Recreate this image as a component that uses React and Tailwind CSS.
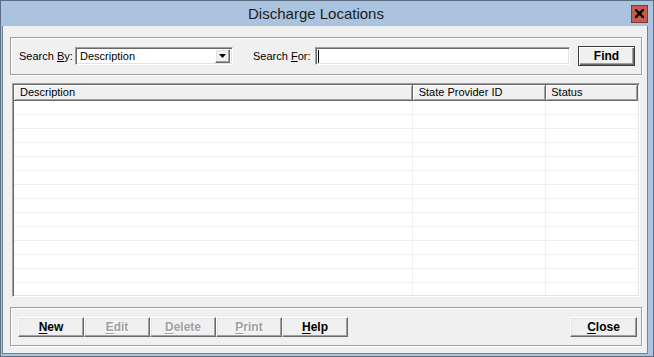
import React from 'react';

const raised = "bg-[#f0f0f0] border border-t-white border-l-white border-r-[#696969] border-b-[#696969] shadow-[inset_-1px_-1px_0_#a0a0a0,inset_1px_1px_0_#e3e3e3]";
const sunken = "bg-white border border-t-[#a0a0a0] border-l-[#a0a0a0] border-r-white border-b-white shadow-[inset_1px_1px_0_#696969,inset_-1px_-1px_0_#e3e3e3]";
const etched = "border border-[#a0a0a0] shadow-[inset_1px_1px_0_#fff,1px_1px_0_#fff]";
const headCell = "h-full bg-[#f0f0f0] border-r border-b border-[#696969] shadow-[inset_1px_1px_0_#fff,inset_-1px_-1px_0_#a0a0a0] flex items-center";

function Btn({ label, hot, disabled, width = "w-[66px]", isDefault }) {
    const rest = label.slice(1);
    return (
        <button
            className={`${width} h-[20px] flex items-center justify-center text-[12px] font-bold ${isDefault ? "bg-[#f0f0f0] border border-[#3c3c3c] shadow-[inset_1px_1px_0_#fff,inset_-1px_-1px_0_#696969,inset_-2px_-2px_0_#a0a0a0]" : raised} ${disabled ? "text-[#a0a0a0] [text-shadow:1px_1px_0_#fff]" : "text-black"}`}
        >
            {hot ? <span className="underline underline-offset-[2px]">{label[0]}</span> : label[0]}
            {rest}
        </button>
    );
}

const rows = Array.from({ length: 14 });

export default function App() {
    return (
        <div className="w-[654px] h-[357px] bg-[#aac3de] border border-[#5c6f85] flex flex-col font-['Liberation_Sans',Arial,sans-serif] text-[11px] text-black">
            {/* title bar */}
            <div className="h-[25px] flex items-center shrink-0">
                <div className="flex-1 text-center text-[15px] text-[#1b1b1b] pt-[1px]">Discharge Locations</div>
                <div className="w-[17px] h-[18px] mr-[5px] bg-[#c75a4e] border border-[#7e3b32] flex items-center justify-center">
                    <svg width="9" height="9" viewBox="0 0 9 9">
                        <path d="M1 1 L8 8 M8 1 L1 8" stroke="#000" strokeWidth="2.4" strokeLinecap="square" />
                    </svg>
                </div>
            </div>

            {/* client area */}
            <div className="flex-1 ml-[1px] mr-[5px] mb-[2px] border-x border-b border-[#6f8297] bg-[#f0f0f0] pt-[11px] pl-[7px] pr-[5px] flex flex-col">
                {/* search group */}
                <div className={`h-[38px] ${etched} flex items-center pl-[8px]`}>
                    <span className="w-[56px]">Search <span className="underline">B</span>y:</span>
                    <div className={`w-[158px] h-[18px] ${sunken} flex items-center pl-[4px] pr-[2px]`}>
                        <span className="flex-1">Description</span>
                        <div className={`w-[15px] h-[14px] ${raised} flex items-center justify-center`}>
                            <svg width="7" height="4" viewBox="0 0 7 4">
                                <path d="M0 0 H7 L3.5 4 Z" fill="#000" />
                            </svg>
                        </div>
                    </div>
                    <span className="w-[62px] ml-[20px]">Search <span className="underline">F</span>or:</span>
                    <div className={`w-[255px] h-[18px] ${sunken} flex items-center pl-[2px]`}>
                        <div className="w-[1px] h-[13px] bg-black" />
                    </div>
                    <div className="ml-[8px]">
                        <Btn label="Find" width="w-[57px]" isDefault />
                    </div>
                </div>

                {/* list */}
                <div className={`mt-[8px] ml-[2px] w-[628px] h-[214px] ${sunken} p-[1px] flex flex-col overflow-hidden`}>
                    <div className="h-[16px] flex shrink-0">
                        <div className={`w-[400px] pl-[6px] ${headCell}`}>Description</div>
                        <div className={`w-[134px] pl-[6px] ${headCell}`}>State Provider ID</div>
                        <div className={`w-[92px] pl-[5px] ${headCell}`}>Status</div>
                    </div>
                    <div className="flex-1 flex flex-col overflow-hidden">
                        {rows.map((_, i) => (
                            <div key={i} className="h-[14px] shrink-0 flex border-b border-[#f0f0f0]">
                                <div className="w-[400px] border-r border-[#f0f0f0]" />
                                <div className="w-[134px] border-r border-[#f0f0f0]" />
                                <div className="w-[92px]" />
                            </div>
                        ))}
                    </div>
                </div>

                {/* button group */}
                <div className={`mt-[10px] h-[39px] ${etched} flex items-center justify-between pl-[7px] pr-[4px]`}>
                    <div className="flex">
                        <Btn label="New" hot />
                        <Btn label="Edit" hot disabled />
                        <Btn label="Delete" hot disabled />
                        <Btn label="Print" hot disabled />
                        <Btn label="Help" hot />
                    </div>
                    <Btn label="Close" hot width="w-[67px]" />
                </div>
            </div>
        </div>
    );
}
